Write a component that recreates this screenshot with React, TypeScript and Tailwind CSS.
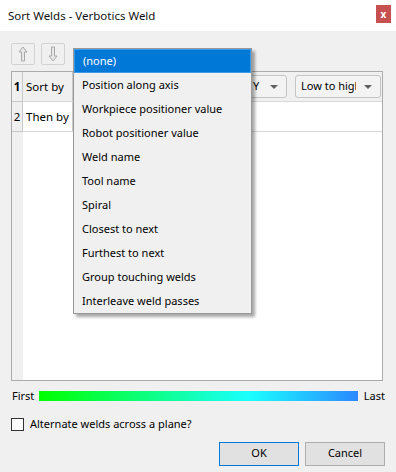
import React from 'react';

const options = [
  '(none)',
  'Position along axis',
  'Workpiece positioner value',
  'Robot positioner value',
  'Weld name',
  'Tool name',
  'Spiral',
  'Closest to next',
  'Furthest to next',
  'Group touching welds',
  'Interleave weld passes',
];

function Arrow({ up }: { up?: boolean }) {
  return (
    <svg width="10" height="16" viewBox="0 0 10 16" className={up ? '' : 'rotate-180'}>
      <path d="M5 1 L9 6 H6.5 V15 H3.5 V6 H1 Z" fill="#e8e8e8" stroke="#a8a8a8" strokeWidth="1" />
    </svg>
  );
}

function Combo({ label, className }: { label: string; className: string }) {
  return (
    <div
      className={`flex items-center h-[23px] rounded-[3px] border border-[#c4c4c4] bg-[#f3f3f3] overflow-hidden ${className}`}
    >
      <span className="flex-1 pl-[5px] whitespace-nowrap overflow-hidden text-black">{label}</span>
      <svg width="8" height="4" viewBox="0 0 8 4" className="mx-[8px] shrink-0">
        <path d="M0 0 H8 L4 4 Z" fill="#606060" />
      </svg>
    </div>
  );
}

export default function App() {
  return (
    <div
      className="relative w-[396px] h-[472px] bg-[#f0f0f0] overflow-hidden text-[11px] text-black"
      style={{ fontFamily: '"Noto Sans", "Liberation Sans", sans-serif' }}
    >
      {/* Title bar */}
      <div className="h-[31px] bg-white flex items-center justify-between pl-[8px] pr-[5px]">
        <span className="text-[11.5px] text-[#111]">Sort Welds - Verbotics Weld</span>
        <div className="w-[15px] h-[18px] mb-[4px] bg-[#c75050] flex items-center justify-center text-white font-bold text-[10px] leading-none">
          x
        </div>
      </div>

      <div className="pl-[11px] pr-[13px]">
        {/* Up / down */}
        <div className="flex gap-[6px] mt-[12px]">
          <div className="w-[24px] h-[22px] rounded-[2px] border border-[#d2d2d2] bg-[#f0f0f0] flex items-center justify-center">
            <Arrow up />
          </div>
          <div className="w-[24px] h-[22px] rounded-[2px] border border-[#d2d2d2] bg-[#f0f0f0] flex items-center justify-center">
            <Arrow />
          </div>
        </div>

        {/* Table */}
        <div className="mt-[6px] h-[310px] border border-[#ababab] bg-white flex">
          <div className="w-[11px] bg-[#f0f0f0] flex flex-col">
            <div className="h-[30px] border-b border-r border-[#c8c8c8] flex items-center justify-center font-bold text-[11.5px]">
              1
            </div>
            <div className="h-[30px] border-b border-r border-[#c8c8c8] flex items-center justify-center text-[11.5px]">
              2
            </div>
          </div>
          <div className="flex-1 flex flex-col">
            <div className="h-[30px] bg-[#f0f0f0] border-b border-[#d8d8d8] flex items-center">
              <div className="w-[50px] h-full border-r border-[#c8c8c8] flex items-center pl-[3px] text-[11.5px]">
                Sort by
              </div>
              <div className="flex-1 flex items-center justify-end gap-[8px] pr-[1px]">
                <Combo label="Y" className="w-[40px]" />
                <Combo label="Low to high" className="w-[86px]" />
              </div>
            </div>
            <div className="h-[30px] border-b border-[#d8d8d8] flex items-center">
              <div className="w-[50px] h-full border-r border-[#c8c8c8] flex items-center pl-[3px] text-[11.5px]">
                Then by
              </div>
            </div>
          </div>
        </div>

        {/* Gradient */}
        <div className="flex items-center mt-[9px] h-[12px] -mr-[2px]">
          <span className="w-[28px] pl-[1px]">First</span>
          <div
            className="flex-1 h-[10px]"
            style={{
              background: 'linear-gradient(to right, #00ff00 0%, #0dff85 35%, #1affff 66%, #2b88ff 100%)',
            }}
          />
          <span className="w-[27px] text-right">Last</span>
        </div>

        {/* Checkbox */}
        <div className="flex items-center gap-[6px] mt-[14px]">
          <div className="w-[13px] h-[13px] border border-[#333] bg-white" />
          <span>Alternate welds across a plane?</span>
        </div>

        {/* Buttons */}
        <div className="flex justify-end gap-[6px] mt-[9px] -mr-[2px]">
          <div className="w-[80px] h-[24px] border border-[#0078d7] bg-[#e1e1e1] flex items-center justify-center">
            OK
          </div>
          <div className="w-[80px] h-[24px] border border-[#adadad] bg-[#e1e1e1] flex items-center justify-center">
            Cancel
          </div>
        </div>
      </div>

      {/* Dropdown popup */}
      <div className="absolute left-[73px] top-[48px] w-[179px] border border-[#999] bg-[#f0f0f0] shadow-[3px_3px_3px_rgba(0,0,0,0.35)]">
        {options.map((o, i) => (
          <div
            key={o}
            className={
              i === 0
                ? 'h-[24px] flex items-center pl-[8px] bg-[#0078d7] text-white border border-[#3c9ae6]'
                : 'h-[24px] flex items-center pl-[8px] text-black'
            }
          >
            {o}
          </div>
        ))}
      </div>
    </div>
  );
}
